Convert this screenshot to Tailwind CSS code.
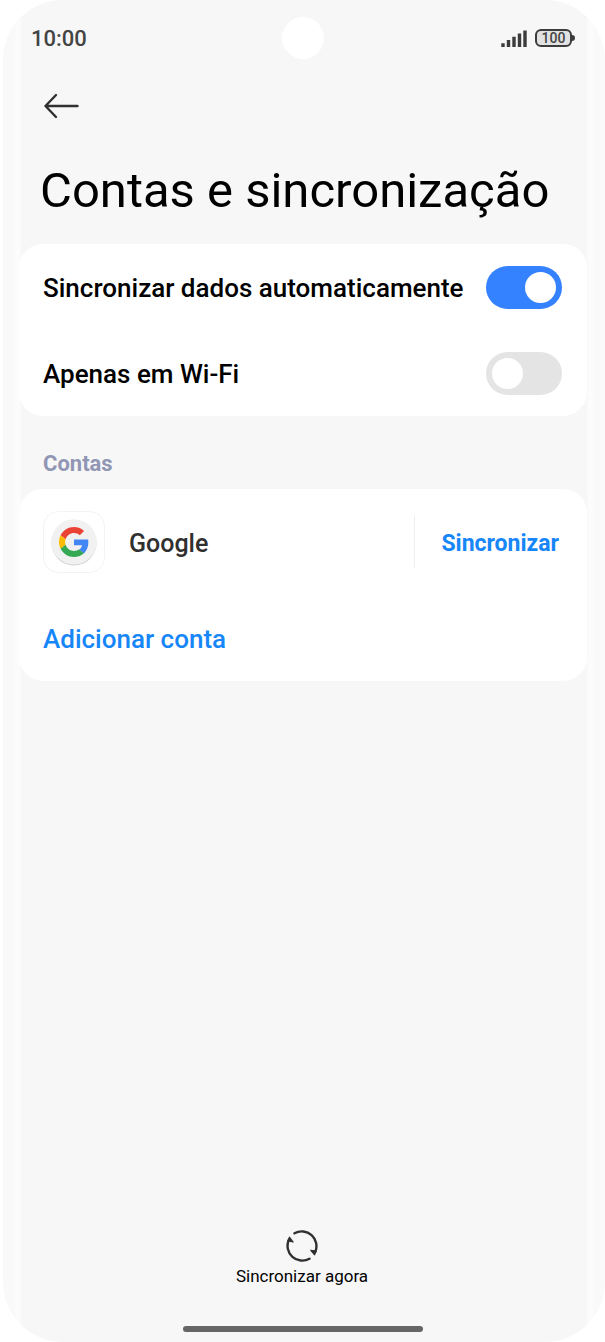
<!DOCTYPE html>
<html lang="pt">
<head>
<meta charset="utf-8">
<meta name="viewport" content="width=device-width, initial-scale=1">
<title>Contas e sincronização</title>
<script src="https://cdn.jsdelivr.net/npm/@tailwindcss/browser@4"></script>
</head>
<body class="bg-white pl-[3px] font-['Roboto',sans-serif] text-black">
<div class="flex min-h-screen flex-col rounded-[60px] bg-[linear-gradient(to_right,#f9f9f9_0px,#f9f9f9_11px,#fcfcfc_14px,#fcfcfc_16px,#f7f7f7_19px,#f7f7f7_calc(100%_-_19px),#fcfcfc_calc(100%_-_16px),#fcfcfc_calc(100%_-_13px),#f9f9f9_calc(100%_-_10px),#fafafa_100%)] pr-[18px] pl-4">
  <header class="grid h-[76px] grid-cols-[1fr_auto_1fr] items-center pr-3 pl-3 text-[#444]">
    <time class="pt-[2px] text-[22px] leading-6 font-medium">10:00</time>
    <span class="size-[42px] rounded-full bg-white"></span>
    <div class="flex items-center gap-2 justify-self-end">
      <svg class="h-[17px] w-[26px]" viewBox="0 0 26 17" fill="none" stroke="#3c3c3c" stroke-width="3.400" stroke-linecap="butt" aria-label="Sinal"><path d="M2 13.200V17M7.500 10V17M13 6.800V17M18.500 3.600V17M24 .5V17"/></svg>
      <div class="flex items-center">
        <span class="flex h-[18px] w-[37px] items-center justify-center rounded-[6px] border-2 border-[#3c3c3c] bg-[#e2e2e2] text-[14px] leading-none font-medium">100</span>
        <span class="h-[6px] w-[3px] rounded-r-sm bg-[#3c3c3c]"></span>
      </div>
    </div>
  </header>

  <main class="flex flex-col">
    <button class="ml-6 flex h-[60px] w-10 items-center" aria-label="Voltar">
      <svg class="h-[26px] w-9" viewBox="0 0 36 26" fill="none" stroke="#303030" stroke-width="2.400" stroke-linecap="round" stroke-linejoin="round"><path d="M34.500 13H2.500M13 2L2.500 13l10.500 11"/></svg>
    </button>
    <h1 class="flex h-[108px] items-center pl-[21px] text-[49px] leading-none whitespace-nowrap">Contas e sincronização</h1>

    <section class="rounded-[24px] bg-white pr-[25px] pl-6 text-[26px] leading-8 font-medium">
      <label class="flex h-[86px] items-center justify-between whitespace-nowrap">
        <span class="pt-[2px]">Sincronizar dados automaticamente</span>
        <input type="checkbox" role="switch" checked class="h-[43px] w-[76px] shrink-0 appearance-none rounded-full bg-[#e4e4e4] p-[6px] before:block before:size-[31px] before:rounded-full before:bg-white checked:bg-[#3482ff] checked:before:ml-[33px]">
      </label>
      <label class="flex h-[86px] items-center justify-between whitespace-nowrap">
        <span class="pt-[2px]">Apenas em Wi-Fi</span>
        <input type="checkbox" role="switch" class="h-[43px] w-[76px] shrink-0 appearance-none rounded-full bg-[#e4e4e4] p-[6px] before:block before:size-[31px] before:rounded-full before:bg-white checked:bg-[#3482ff] checked:before:ml-[33px]">
      </label>
    </section>

    <h2 class="flex h-[73px] items-center pt-[22px] pl-6 text-[22px] leading-7 font-bold text-[#9196b4]">Contas</h2>

    <section class="rounded-[24px] bg-white pr-7 pl-6">
      <div class="flex h-[106px] items-center">
        <svg class="size-[62px] shrink-0" viewBox="0 0 62 62" aria-hidden="true">
          <rect x=".5" y=".5" width="61" height="61" rx="15" fill="#fff" stroke="#f3f3f3"/>
          <circle cx="31" cy="32" r="22.500" fill="#c8c8c8"/>
          <circle cx="31" cy="31" r="22.800" fill="#f1f1f1"/>
          <g transform="translate(16 16) scale(.625)">
            <path fill="#ea4335" d="M24 9.500c3.540 0 6.710 1.220 9.210 3.600l6.850-6.850C35.900 2.380 30.470 0 24 0 14.620 0 6.510 5.380 2.560 13.220l7.980 6.190C12.430 13.720 17.740 9.500 24 9.500z"/>
            <path fill="#4285f4" d="M46.980 24.550c0-1.570-.15-3.090-.38-4.550H24v9.020h12.940c-.58 2.960-2.260 5.480-4.780 7.180l7.730 6c4.510-4.180 7.090-10.360 7.090-17.650z"/>
            <path fill="#fbbc05" d="M10.530 28.590c-.48-1.450-.76-2.990-.76-4.590s.27-3.140.76-4.590l-7.980-6.190C.92 16.460 0 20.120 0 24c0 3.880.92 7.540 2.560 10.780l7.970-6.190z"/>
            <path fill="#34a853" d="M24 48c6.480 0 11.930-2.130 15.890-5.810l-7.730-6c-2.150 1.450-4.920 2.300-8.160 2.300-6.260 0-11.570-4.220-13.470-9.910l-7.980 6.190C6.510 42.620 14.620 48 24 48z"/>
          </g>
        </svg>
        <span class="ml-6 flex-1 pt-[3px] text-[25px] leading-8 font-medium text-[#303030]">Google</span>
        <button class="h-[52px] border-l border-[#eeeeee] pt-[3px] pl-[26px] text-[23px] leading-8 font-bold text-[#1686f8]">Sincronizar</button>
      </div>
      <button class="flex h-[86px] items-center pt-[2px] text-[26px] leading-8 font-medium text-[#1686f8]">Adicionar conta</button>
    </section>
  </main>

  <footer class="mt-auto flex flex-col items-center pb-[10px]">
    <button class="flex flex-col items-center gap-1 pr-[2px]">
      <svg class="size-8" viewBox="0 0 32 32" fill="none" stroke="#303030" stroke-width="2.400" stroke-linecap="round" aria-hidden="true">
        <path d="M8.500 3.300A14.700 14.700 0 0 1 29.200 22M23.500 28.700A14.700 14.700 0 0 1 2.800 10"/>
        <path d="M3.400 7.200L7.200 12L1.800 11zM28.600 24.800L24.800 20.300L30.200 21z" fill="#303030" stroke-width="1.200" stroke-linejoin="round"/>
      </svg>
      <span class="text-[17px] leading-5">Sincronizar agora</span>
    </button>
    <span class="mt-10 h-[6px] w-60 rounded-full bg-[#666]"></span>
  </footer>
</div>
</body>
</html>
